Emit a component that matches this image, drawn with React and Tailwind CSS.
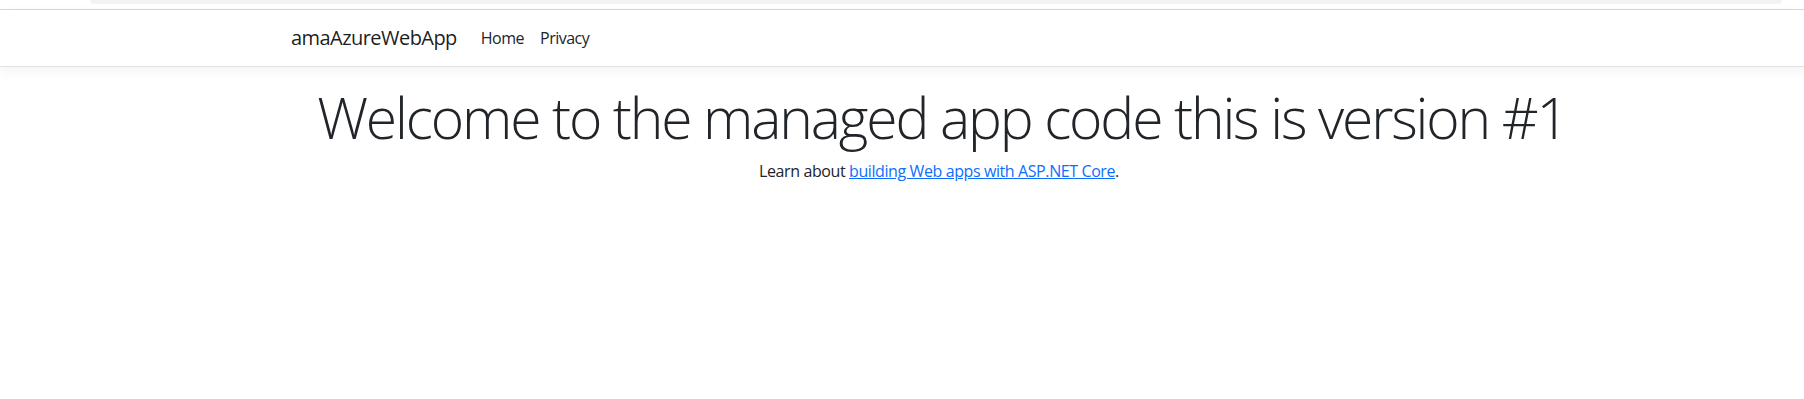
export default function App() {
  return (
    <div className="w-[1804px] h-[399px] bg-white overflow-hidden text-[#212529] font-['Open_Sans','Noto_Sans',sans-serif]">
      {/* top chrome strip */}
      <div className="h-[9px]">
        <div className="ml-[90px] w-[1692px] h-[4px] bg-[#f1f3f4] rounded-b-[8px]" />
      </div>
      <div className="h-px bg-[#d9d9d9]" />

      <nav className="bg-white border-b border-[#dee2e6] shadow-[0_4px_12px_rgba(0,0,0,0.05)] mb-4">
        <div className="ml-[279px] w-[1320px] px-3 py-2 flex items-center">
          <a className="text-[20px] leading-[30px] py-[5px] mr-4 text-[rgba(0,0,0,0.9)] tracking-[-0.55px]">amaAzureWebApp</a>
          <ul className="flex items-center text-[16px] leading-6">
            <li><a className="block px-2 py-2 text-[#212529] tracking-[-0.5px]">Home</a></li>
            <li><a className="block px-2 py-2 text-[#212529] tracking-[-0.5px]">Privacy</a></li>
          </ul>
        </div>
      </nav>

      <main className="ml-[279px] w-[1320px] px-3">
        <div className="text-center">
          <h1 className="text-[57px] leading-[1.2] font-light mb-2 tracking-[-2.15px] whitespace-nowrap pl-[6px]">
            Welcome to the managed app code this is version #1
          </h1>
          <p className="text-[16px] leading-6 tracking-[-0.4px]">
            Learn about{" "}
            <a className="text-[#0d6efd] underline">building Web apps with ASP.NET Core</a>.
          </p>
        </div>
      </main>
    </div>
  );
}
